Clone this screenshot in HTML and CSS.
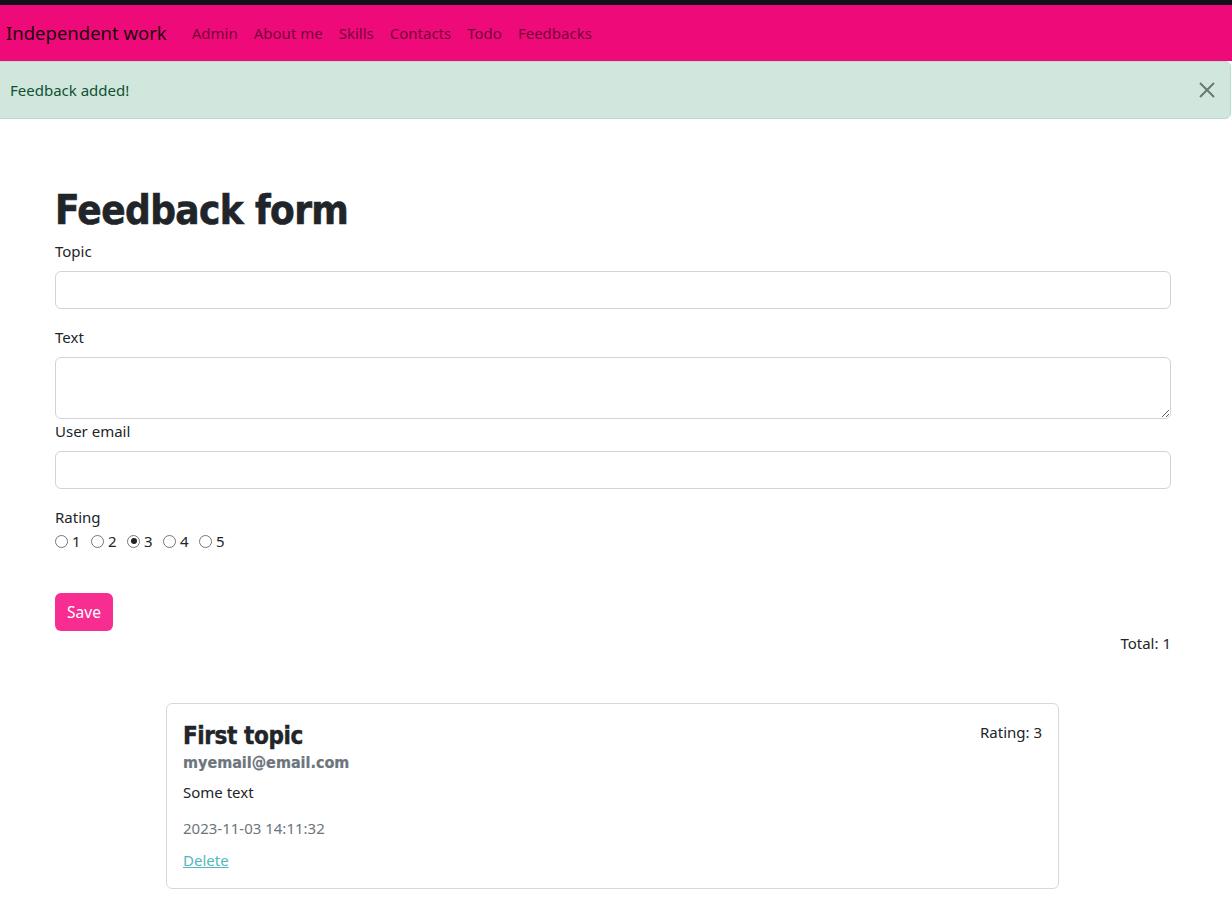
FILE: index.html
```html
<!DOCTYPE html>
<html lang="en">
<head>
<meta charset="utf-8">
<title>Feedback form</title>
<link rel="stylesheet" href="styles.css">
</head>
<body>
<div class="topbar"></div>
<nav class="navbar">
  <a class="brand" href="#">Independent work</a>
  <ul class="nav-links">
    <li><a href="#">Admin</a></li>
    <li><a href="#">About me</a></li>
    <li><a href="#">Skills</a></li>
    <li><a href="#">Contacts</a></li>
    <li><a href="#">Todo</a></li>
    <li><a href="#">Feedbacks</a></li>
  </ul>
</nav>
<div class="alert">
  <span>Feedback added!</span>
  <button class="btn-close" aria-label="Close">
    <svg viewBox="0 0 16 16" width="16" height="16"><path d="M1 1 L15 15 M15 1 L1 15" stroke="currentColor" stroke-width="2" fill="none"/></svg>
  </button>
</div>
<main class="container">
  <h1 class="title">Feedback form</h1>
  <form class="form">
    <div class="field">
      <label class="label">Topic</label>
      <input class="control" type="text">
    </div>
    <div class="field">
      <label class="label">Text</label>
      <textarea class="control area" rows="2"></textarea>
    </div>
    <div class="field">
      <label class="label">User email</label>
      <input class="control" type="email">
    </div>
    <div class="field rating">
      <label class="label plain">Rating</label>
      <div class="radios">
        <label class="radio"><input type="radio" name="r"> 1</label>
        <label class="radio"><input type="radio" name="r"> 2</label>
        <label class="radio"><input type="radio" name="r" checked> 3</label>
        <label class="radio"><input type="radio" name="r"> 4</label>
        <label class="radio"><input type="radio" name="r"> 5</label>
      </div>
    </div>
    <button type="button" class="btn-save">Save</button>
  </form>
  <div class="total">Total: 1</div>
  <div class="card">
    <div class="card-head">
      <h4 class="card-title">First topic</h4>
      <span class="card-rating">Rating: 3</span>
    </div>
    <h6 class="card-sub">myemail@email.com</h6>
    <p class="card-text">Some text</p>
    <p class="card-date">2023-11-03 14:11:32</p>
    <a class="card-link" href="#">Delete</a>
  </div>
</main>
</body>
</html>
```
FILE: styles.css
```css
* { box-sizing: border-box; }
html, body { margin: 0; padding: 0; }
body {
  font-family: "Noto Sans", "Open Sans", sans-serif;
  font-size: 15px;
  line-height: 24px;
  color: #212529;
  background: #fff;
  overflow: hidden;
}
.topbar { height: 5px; background: #12101a; }
.navbar {
  height: 56px;
  background: #ee0a78;
  display: flex;
  align-items: center;
  padding-left: 6px;
}
.brand {
  font-size: 18.5px;
  color: rgba(0,0,0,0.9);
  text-decoration: none;
  margin-right: 17px;
}
.nav-links { list-style: none; margin: 0; padding: 0; display: flex; }
.nav-links a {
  display: block;
  padding: 8px 8px;
  color: rgba(0,0,0,0.55);
  text-decoration: none;
  font-size: 15px;
}
.alert {
  position: relative;
  margin-left: -7px;
  margin-right: 1px;
  height: 58px;
  padding: 16px 16px;
  background: #d1e7dd;
  border: 1px solid #badbcc;
  border-radius: 6px;
  color: #0f5132;
}
.btn-close {
  position: absolute;
  top: 0;
  right: -1px;
  height: 56px;
  width: 48px;
  border: 0;
  background: transparent;
  color: #6b7772;
  padding: 0;
  display: flex;
  align-items: center;
  justify-content: center;
}
.container {
  width: 1116px;
  margin-left: 55px;
  padding-top: 64px;
}
.title {
  font-family: "DejaVu Sans Condensed", "DejaVu Sans", sans-serif;
  font-weight: 700;
  font-size: 40px;
  line-height: 48px;
  letter-spacing: -0.6px;
  -webkit-text-stroke: 0.6px #212529;
  padding-top: 3px;
  margin: 0 0 5px;
}
.field { margin-bottom: 16px; }
.label { display: block; margin-bottom: 8px; }
.label.plain { margin-bottom: 0; }
.control {
  display: block;
  width: 100%;
  height: 38px;
  padding: 6px 12px;
  font: inherit;
  border: 1px solid #ced4da;
  border-radius: 6px;
  background: #fff;
}
.area { height: 62px; resize: vertical; }
.field:has(.area) { margin-bottom: 0; }
.rating { margin-bottom: 40px; }
.radios { display: flex; }
.radio { display: flex; align-items: center; width: 36px; }
.radio input {
  appearance: none;
  -webkit-appearance: none;
  width: 13px;
  height: 13px;
  margin: 0 4px 0 0;
  border: 1px solid #767676;
  border-radius: 50%;
  background: #fff;
  position: relative;
}
.radio input:checked::after {
  content: "";
  position: absolute;
  left: 2.5px;
  top: 2.5px;
  width: 6px;
  height: 6px;
  border-radius: 50%;
  background: #222;
}
.btn-save {
  display: block;
  height: 38px;
  width: 58px;
  padding: 6px 0;
  font: inherit;
  font-size: 15.5px;
  color: #fff;
  background: #f72d91;
  border: 0;
  border-radius: 6px;
}
.total { text-align: right; }
.card {
  width: 893px;
  margin: 48px 0 0 111px;
  border: 1px solid #d6d8db;
  border-radius: 6px;
  padding: 16px;
}
.card-head { display: flex; justify-content: space-between; align-items: flex-start; }
.card-title {
  font-family: "DejaVu Sans Condensed", "DejaVu Sans", sans-serif;
  font-weight: 700;
  font-size: 24px;
  line-height: 29px;
  letter-spacing: -0.4px;
  -webkit-text-stroke: 0.4px #212529;
  padding-top: 2px;
  margin: 0 0 6px;
}
.card-sub {
  font-family: "DejaVu Sans Condensed", "DejaVu Sans", sans-serif;
  font-weight: 700;
  font-size: 16px;
  line-height: 19px;
  color: #6c757d;
  -webkit-text-stroke: 0.2px #6c757d;
  margin: -4px 0 8px;
}
.card-text { margin: 0 0 12px; }
.card-date { margin: 0 0 8px; color: #6c757d; }
.card-link { color: #52b8bd; text-decoration: underline; }
```
